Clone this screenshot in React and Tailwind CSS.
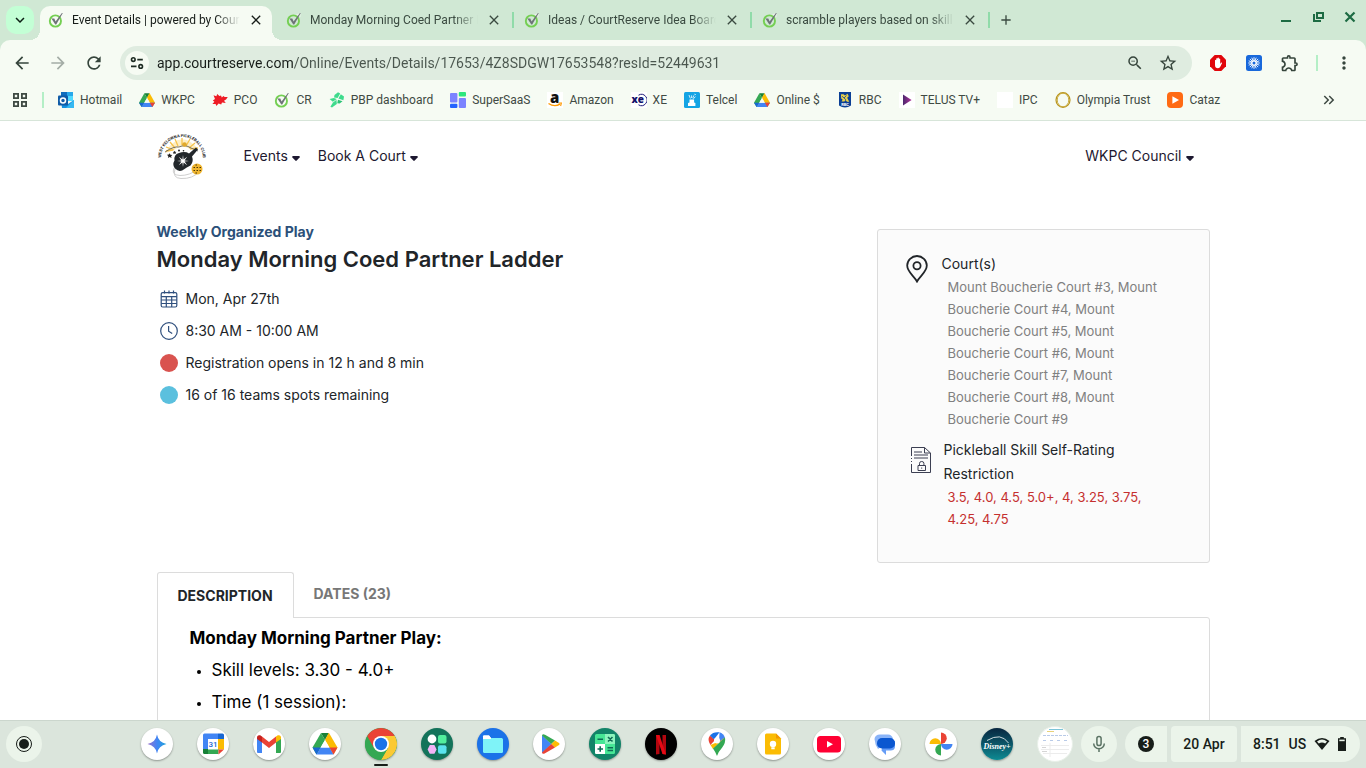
import React from 'react';
import {
  MdArrowBack,
  MdArrowForward,
  MdRefresh,
  MdStarOutline,
  MdMoreVert,
  MdClose,
  MdAdd,
  MdKeyboardArrowDown,
  MdKeyboardDoubleArrowRight,
  MdOutlineExtension,
  MdOutlineZoomOut,
} from 'react-icons/md';

/* ---------- favicons ---------- */

function CourtReserve({ className }) {
  return (
    <svg viewBox="0 0 16 16" className={className} fill="none">
      <circle cx="7.4" cy="9" r="5.6" stroke="#74cf52" strokeWidth="1.9" />
      <path d="M10 2.5 14.5 1v4Z" fill="#f6fbf3" fillOpacity=".7" />
      <path d="M3.4 6.4h2.9l1.3 3.1L13.9 1h.9L8.2 12.4h-.9Z" fill="#6f7378" />
    </svg>
  );
}

function DriveLogo({ className }) {
  return (
    <svg viewBox="0 0 24 22" className={className}>
      <path d="M8 1h8l-4 7Z" fill="#188038" />
      <path d="M8 1 0 15l4 6.5L12 8Z" fill="#34a853" />
      <path d="M16 1h-.4L12 7.6 20 21.5 24 15Z" fill="#fbbc04" />
      <path d="M7.5 15H24l-4 6.5H4Z" fill="#4285f4" />
      <path d="M0 15h7.7L4 21.5Z" fill="#1967d2" />
      <path d="M16.3 15H24l-4 6.5Z" fill="#ea4335" />
      <path d="M12 8 8 15h8Z" fill="#f6fbf3" />
    </svg>
  );
}

function Outlook() {
  return (
    <svg viewBox="0 0 16 16" className="size-4">
      <path d="M3 0h12v8H3Z" fill="#28a8ea" />
      <path d="M3 0h6v5H3Z" fill="#0f6cbd" />
      <path d="M9 4h6v5H9Z" fill="#50d9ff" />
      <path d="M3 8l7 4 6-4v8H4Z" fill="#1490df" />
      <path d="M16 8v8H8Z" fill="#35b8f1" />
      <rect y="3.5" width="10" height="10" rx="1" fill="#0f5ba7" />
      <circle cx="5" cy="8.5" r="2.5" fill="none" stroke="#fff" strokeWidth="1.5" />
    </svg>
  );
}

function Maple() {
  return (
    <svg viewBox="0 0 16 16" className="size-4" fill="#ee1c25">
      <path d="M1.5 3.2 4.4 4.2 5.2 2 7.4 4 9 3.4 9.8 5.4 11.500 4 12.600 5 15.800 5 14 7.400 12 8.800 13.800 11 10 10.600 9.200 12.400 6.600 11.600 4.400 14 3.600 12 .4 12 2.400 9.800.8 8.600 3 7Z" />
    </svg>
  );
}

function Paddle() {
  return (
    <svg viewBox="0 0 16 16" className="size-4" fill="#3edb8c">
      <path d="M5.5 3 9 .3l2.2 1.3L8.6 6 5 5.4Z" />
      <path d="M11.800 2.200 15 4.600l-.6 3.600-5-1.600Z" />
      <path d="M.6 7 4.800 6l3 1L3.800 9.800Z" />
      <path d="M9 7.800l4.500 1.400-2.800 2.400-2.500-.4Z" fill="#2bc476" />
      <path d="M7.500 7.800 7.800 12 3 15.600l-1.600-.8L4 10.600Z" />
    </svg>
  );
}

function SuperSaas() {
  return (
    <svg viewBox="0 0 16 16" className="size-4">
      <rect width="7.4" height="9.5" y="1" rx="1" fill="#7c83ff" />
      <rect x="8.8" width="7.2" height="4.4" rx="1" fill="#2ee67c" />
      <rect y="11.8" width="7.4" height="4.2" rx="1" fill="#2563ff" />
      <rect x="8.8" y="6" width="7.2" height="10" rx="1" fill="#7c83ff" />
    </svg>
  );
}

function Amazon() {
  return (
    <svg viewBox="0 0 16 16" className="size-4">
      <rect width="16" height="16" fill="#fff" />
      <text x="7.6" y="10.5" textAnchor="middle" fontFamily="Open Sans" fontWeight="800" fontSize="15" fill="#111">a</text>
      <path d="M1.5 11.5q6 4 11.5.6" fill="none" stroke="#f90" strokeWidth="1.4" />
      <path d="M11.4 11h3l-.8 3" fill="none" stroke="#f90" strokeWidth="1.1" />
    </svg>
  );
}

function Xe() {
  return (
    <svg viewBox="0 0 16 16" className="size-4">
      <rect width="16" height="16" fill="#fff" />
      <path d="M7.5 3.2a5.6 5.6 0 1 1 0 9.6" fill="none" stroke="#1f1c7a" strokeWidth="1" />
      <text x="6.8" y="11.2" textAnchor="middle" fontFamily="Open Sans" fontWeight="800" fontSize="10" fill="#14116b">xe</text>
    </svg>
  );
}

function Telcel() {
  return (
    <svg viewBox="0 0 16 16" className="size-4">
      <rect width="16" height="16" rx="1.5" fill="#14a4e4" />
      <path d="M5.5 7.5h4.6v3l1.3.6V14H4v-2.900l1.500-.6Z" fill="#fff" />
      <path d="M6.400 6.500 5 3M7.600 6V3.400M8.700 6.200l1.200-2.800M9.400 6.800l2-2.200M10.400 2.200l1.400.4" stroke="#fff" strokeWidth=".8" />
    </svg>
  );
}

function Rbc() {
  return (
    <svg viewBox="0 0 16 16" className="size-4">
      <path d="M2 0h12v13.500q-6 4-12 0Z" fill="#0b3f95" />
      <path d="M4 2.200h2.500L8 3.400l2.500-1.600 1.300 2.400-1.600 1.600L12.200 9.800H10L8.600 8 7.400 9.600H4.600l1-2.200-1.400-1Z" fill="#e8d04a" />
      <path d="M5 4.200l4 3.600M9.500 3.500 7 6" stroke="#0b3f95" strokeWidth=".8" />
      <text x="8" y="14" textAnchor="middle" fontFamily="Roboto" fontWeight="700" fontSize="4" fill="#fff">RBC</text>
    </svg>
  );
}

function Telus() {
  return (
    <svg viewBox="0 0 16 16" className="size-4">
      <defs>
        <linearGradient id="telus" x1="0" x2="1">
          <stop offset="0" stopColor="#4b286d" />
          <stop offset="1" stopColor="#b0329a" />
        </linearGradient>
      </defs>
      <rect width="16" height="16" fill="#fff" />
      <path d="M4 2.500 12.600 8 4 13.500Z" fill="url(#telus)" />
    </svg>
  );
}

function Blank() {
  return <span className="block size-4 bg-white" />;
}

function Olympia() {
  return (
    <svg viewBox="0 0 16 16" className="size-4" fill="none">
      <ellipse cx="8" cy="8" rx="7" ry="7.3" stroke="#b8941c" strokeWidth="1.2" />
      <ellipse cx="8" cy="8" rx="5.8" ry="6.8" stroke="#c9aa3c" strokeWidth="1" />
    </svg>
  );
}

function Cataz() {
  return (
    <svg viewBox="0 0 16 16" className="size-4">
      <rect width="16" height="16" rx="4" fill="#ff6a13" />
      <path d="M5.400 4.200 12 8l-6.600 3.800Z" fill="#fff" />
    </svg>
  );
}

/* ---------- browser ---------- */

const tabs = [
  'Event Details | powered by CourtReserve',
  'Monday Morning Coed Partner Ladder',
  'Ideas / CourtReserve Idea Board',
  'scramble players based on skill level',
];

const bookmarks = [
  { label: 'Hotmail', icon: <Outlook /> },
  { label: 'WKPC', icon: <DriveLogo className="size-4" /> },
  { label: 'PCO', icon: <Maple /> },
  { label: 'CR', icon: <CourtReserve className="size-4" /> },
  { label: 'PBP dashboard', icon: <Paddle /> },
  { label: 'SuperSaaS', icon: <SuperSaas /> },
  { label: 'Amazon', icon: <Amazon /> },
  { label: 'XE', icon: <Xe /> },
  { label: 'Telcel', icon: <Telcel /> },
  { label: 'Online $', icon: <DriveLogo className="size-4" /> },
  { label: 'RBC', icon: <Rbc /> },
  { label: 'TELUS TV+', icon: <Telus /> },
  { label: 'IPC', icon: <Blank /> },
  { label: 'Olympia Trust', icon: <Olympia /> },
  { label: 'Cataz', icon: <Cataz /> },
];

function TabStrip() {
  return (
    <div className="flex h-10 items-start bg-[#d0e8d4] pt-1.5 pl-1.5 text-xs text-[#3a4a40]">
      <button aria-label="Search tabs" className="mr-1.5 flex size-7 items-center justify-center rounded-[10px] bg-[#c3ffd5] text-[#0c1f14]">
        <MdKeyboardArrowDown className="text-lg" />
      </button>
      {tabs.map((title, i) => (
        <React.Fragment key={title}>
          <div
            className={
              i === 0
                ? 'relative flex h-[34px] w-[232px] items-center rounded-t-[10px] bg-[#f6fbf3] pr-2 pb-1.5 pl-2 text-[#171d19]'
                : 'flex h-7 w-[232px] items-center pr-2 pl-2'
            }
          >
            {i === 0 && (
              <>
                <span className="absolute bottom-0 -left-2.5 size-2.5 bg-[radial-gradient(circle_at_top_left,transparent_10px,#f6fbf3_10px)]" />
                <span className="absolute -right-2.5 bottom-0 size-2.5 bg-[radial-gradient(circle_at_top_right,transparent_10px,#f6fbf3_10px)]" />
              </>
            )}
            <CourtReserve className="mr-2 size-4 shrink-0" />
            <span className="w-[168px] overflow-hidden whitespace-nowrap [mask-image:linear-gradient(to_right,black_144px,transparent_168px)]">
              {title}
            </span>
            <button aria-label="Close tab" className="ml-auto">
              <MdClose className="size-4" />
            </button>
          </div>
          <span className={i === 0 ? 'w-1.5' : 'mx-0.5 mt-1.5 h-4 w-0.5 bg-[#90dba9]'} />
        </React.Fragment>
      ))}
      <button aria-label="New tab" className="flex size-7 items-center justify-center">
        <MdAdd className="size-4" />
      </button>
      <div className="ml-auto flex gap-4 pt-[3px] pr-2 text-[#1d6b43]">
        <button aria-label="Minimize">
          <svg viewBox="0 0 16 16" className="size-4" fill="currentColor"><path d="M3 11h10v2H3Z" /></svg>
        </button>
        <button aria-label="Restore">
          <svg viewBox="0 0 16 16" className="size-4" fill="none" stroke="currentColor" strokeWidth="2">
            <path d="M7 4h6v5H7ZM4 5v7h7" />
          </svg>
        </button>
        <button aria-label="Close window">
          <svg viewBox="0 0 16 16" className="size-4" fill="none" stroke="currentColor" strokeWidth="2.2">
            <path d="m3.500 3.500 9 9M12.500 3.500l-9 9" />
          </svg>
        </button>
      </div>
    </div>
  );
}

function Toolbar() {
  return (
    <div className="bg-[#d0e8d4]">
      <div className="flex h-[46px] items-center rounded-t-[10px] bg-[#f6fbf3] pr-3 pl-3 text-[#36453c]">
        <div className="flex gap-4">
          <button aria-label="Back"><MdArrowBack className="size-5" /></button>
          <button aria-label="Forward" className="text-[#a4ada6]"><MdArrowForward className="size-5" /></button>
          <button aria-label="Reload"><MdRefresh className="size-5" /></button>
        </div>
        <div className="ml-4 flex h-[34px] flex-1 items-center rounded-full bg-[#dfece0] pr-3.5 pl-[5px]">
          <button aria-label="Site information" className="mr-2 flex size-6 items-center justify-center rounded-full bg-[#f6fbf3]">
            <svg viewBox="0 0 16 16" className="size-4" fill="none" stroke="#1d2b22" strokeWidth="1.6">
              <circle cx="4.3" cy="4.6" r="1.8" />
              <path d="M8.3 4.6h5.5M2 11.4h5.5" />
              <circle cx="11.7" cy="11.4" r="1.8" />
            </svg>
          </button>
          <input
            type="text"
            aria-label="Address"
            defaultValue="app.courtreserve.com/Online/Events/Details/17653/4Z8SDGW17653548?resId=52449631"
            className="min-w-0 flex-1 bg-[linear-gradient(to_right,#171d19_137px,#4a564e_137px)] bg-clip-text text-sm text-transparent outline-none"
          />
          <button aria-label="Zoom"><MdOutlineZoomOut className="size-[18px]" /></button>
          <button aria-label="Bookmark this page" className="ml-3.5"><MdStarOutline className="size-5" /></button>
        </div>
        <div className="ml-[18px] flex items-center">
          <button aria-label="Ad blocker">
            <svg viewBox="0 0 16 16" className="size-4">
              <path d="M4.7 0h6.6L16 4.7v6.6L11.3 16H4.7L0 11.3V4.7Z" fill="#e1060b" />
              <path d="M5 9V5.2q.7-.8 1.2 0V3.600q.7-.8 1.300 0V3q.8-.8 1.400 0v.9q.7-.7 1.300 0V9l1-1.400q.8-.3.9.4l-1.700 3.600Q9.700 13.300 8 13.300 5 13.300 5 10Z" fill="#fff" />
            </svg>
          </button>
          <button aria-label="Loom" className="ml-5">
            <svg viewBox="0 0 16 16" className="size-4">
              <rect width="16" height="16" rx="2.5" fill="#1868db" />
              <path d="M8 2.200v11.600M2.200 8h11.600M3.900 3.900l8.200 8.200M12.100 3.900l-8.200 8.200M5.800 2.700l4.400 10.600M10.200 2.700 5.800 13.300M2.700 5.800l10.600 4.400M13.300 5.800 2.700 10.200" stroke="#fff" strokeWidth=".9" />
              <circle cx="8" cy="8" r="2.8" fill="#fff" />
              <circle cx="8" cy="8" r="1.5" fill="#1868db" />
            </svg>
          </button>
          <button aria-label="Extensions" className="ml-[18px]"><MdOutlineExtension className="size-5" /></button>
          <span className="ml-4 h-4 w-0.5 bg-[#b4efc6]" />
          <button aria-label="Menu" className="ml-4"><MdMoreVert className="size-5" /></button>
        </div>
      </div>
    </div>
  );
}

function Bookmarks() {
  return (
    <nav className="flex h-[35px] items-start border-b border-[#d7e5d9] bg-[#f6fbf3] pt-1.5 pr-7 pl-3 text-xs text-[#3f4a43]">
      <div className="flex h-4 flex-1 items-center">
        <button aria-label="All tabs">
          <svg viewBox="0 0 16 16" className="size-4" fill="none" stroke="#3f4a43" strokeWidth="1.8">
            <path d="M1.900 1.900h4.200v4.200H1.900zM9.900 1.900h4.200v4.200H9.900zM1.900 9.900h4.200v4.200H1.900zM9.900 9.900h4.200v4.200H9.900z" />
          </svg>
        </button>
        <span className="mr-3.5 ml-3.5 h-4 w-0.5 bg-[#b4efc6]" />
        <div className="flex gap-[17px]">
          {bookmarks.map((b) => (
            <a key={b.label} href="#" className="flex items-center gap-1.5 whitespace-nowrap">
              {b.icon}
              {b.label}
            </a>
          ))}
        </div>
        <button aria-label="More bookmarks" className="ml-auto">
          <MdKeyboardDoubleArrowRight className="size-[18px]" />
        </button>
      </div>
    </nav>
  );
}

/* ---------- page ---------- */

function ClubLogo() {
  return (
    <svg viewBox="0 0 50 50" className="size-[50px]">
      <defs>
        <path id="arc" d="M4 27A21 21 0 0 1 46 27" />
      </defs>
      <path d="M8 21Q24-3 41 18L33 18Q25 13 17 19L8 22Z" fill="#fdeec6" />
      <path d="M17 19 9 16M18 17l-5-6M21 15 18 8M25 14V7M29 15l4-7M32 17l6-5M33 18l8-1M9 20l7-1" stroke="#f6c34c" strokeWidth="1.3" />
      <path d="M8 21q9-6 14-5 6-3 12 1l7 3" stroke="#555" strokeWidth=".8" fill="none" />
      <circle cx="27.500" cy="13.500" r="2.300" fill="#e0a92c" />
      <text fontFamily="Roboto" fontWeight="700" fontSize="4" fill="#222" textAnchor="middle">
        <textPath href="#arc" startOffset="50%">WEST KELOWNA PICKLEBALL CLUB</textPath>
      </text>
      <path d="M18 38q-3 9 6 9.500 12 .5 18-7M17 37q-3 7 6 7.500 10 0 17-6" stroke="#cfcfcf" strokeWidth="1" fill="none" />
      <path d="m39 16.500 2 2-6 7q2 5-1.500 9-4.500 2-6 3.500-5 4-9.500-.5-3-4-.5-8-1-6 4.500-7.500 6-2 10 .5Z" fill="#22272b" />
      <path d="m26 24 .6 4.400 3.600-2.600-2.600 3.600L32 30l-4.400.6 2.600 3.600-3.600-2.600L26 36l-.6-4.400-3.600 2.600 2.600-3.600L20 30l4.400-.6-2.600-3.600 3.600 2.600Z" fill="#fff" />
      <path d="m12.500 22.300 1 1.500 1.800.1-1.200 1.400.5 1.700-2-.9-1.600.8.3-1.700-1.300-1.400 1.800-.2Z" fill="#222" />
      <path d="m17.500 19.800.7 1 1.200.1-.9.9.3 1.200-1.300-.6-1.200.6.3-1.200-.8-.9 1.200-.1Z" fill="#222" />
      <circle cx="22" cy="19.500" r="1" fill="#222" />
      <circle cx="26.500" cy="19.800" r=".8" fill="#222" />
      <circle cx="40" cy="38" r="5.500" fill="#efb52f" />
      <path d="M36.500 36.500H38m1.500 0H41m1.500 0H44M36.500 39.500H38m1.500 0H41m1.500 0H44M38.500 42h1.500M38.500 34h1.500" stroke="#4a3606" strokeWidth="1.200" />
    </svg>
  );
}

function Caret() {
  return (
    <svg viewBox="0 0 8 5" className="mt-1 h-[5px] w-2" fill="#1d1830">
      <path d="M.8 0h6.400q1 .6.400 1.400L4.700 4.600q-.7.7-1.400 0L.4 1.400Q-.2.6.8 0Z" />
    </svg>
  );
}

function CalendarIcon() {
  return (
    <svg viewBox="0 0 18 18" className="size-[18px]" fill="none" stroke="#2f4f7d" strokeWidth="1.2">
      <rect x="1.200" y="2.600" width="15.600" height="14.400" rx="1.500" />
      <path d="M1.200 6.600h15.600M1.200 10h15.600M1.200 13.500h15.600M6.300 6.600V17M11.700 6.600V17M4.500.5v3M9 .5v3M13.500.5v3" />
    </svg>
  );
}

function ClockIcon() {
  return (
    <svg viewBox="0 0 18 18" className="size-[18px]" fill="none" stroke="#2f4f7d" strokeWidth="1.2">
      <circle cx="9" cy="9" r="8.300" />
      <path d="M8.600 4v5.200l3.600 2.400" />
    </svg>
  );
}

function PinIcon() {
  return (
    <svg viewBox="0 0 22 28" className="h-7 w-[22px]" fill="none" stroke="#212529" strokeWidth="1.8">
      <path d="M11 26.500C8 21 1.200 17 1.200 10.600a9.800 9.600 0 0 1 19.600 0C20.800 17 14 21 11 26.500Z" />
      <circle cx="11" cy="10.800" r="3.600" />
    </svg>
  );
}

function RestrictionIcon() {
  return (
    <svg viewBox="0 0 22 28" className="h-7 w-[22px]" fill="none" stroke="#3c3f52" strokeWidth="1">
      <path d="M1.500 10V1.500h13L20.500 7v19.500h-19V18M14.500 1.500V7h6M1.500 12v1M1.500 15v1" />
      <path d="M4 6h8M4 9h14M4 12h14M8 19.500h7.500v5H8zM9.500 19.500v-2.200q0-1.800 2.200-1.800t2.200 1.800v2.200M11.700 21.500v1.200" />
    </svg>
  );
}

const details = [
  { icon: <CalendarIcon />, text: 'Mon, Apr 27th' },
  { icon: <ClockIcon />, text: '8:30 AM - 10:00 AM' },
  { icon: <span className="size-[18px] rounded-full bg-[#d9534f]" />, text: 'Registration opens in 12 h and 8 min' },
  { icon: <span className="size-[18px] rounded-full bg-[#5bc0de]" />, text: '16 of 16 teams spots remaining' },
];

function EventPage() {
  return (
    <main className="min-h-0 flex-1 overflow-hidden bg-white font-['Inter',sans-serif] text-[#212529]">
      <div className="mx-auto max-w-[1053px]">
        <header className="flex h-[70px] items-center text-sm text-[#1d1830]">
          <a href="#" aria-label="West Kelowna Pickleball Club"><ClubLogo /></a>
          <nav className="ml-[37px] flex gap-[18px]">
            <button className="flex items-center gap-1">Events <Caret /></button>
            <button className="flex items-center gap-1">Book A Court <Caret /></button>
          </nav>
          <button className="mr-4 ml-auto flex items-center gap-1">WKPC Council <Caret /></button>
        </header>

        <div className="mt-[38px] flex items-start justify-between">
          <section className="-mt-2">
            <p className="text-sm leading-[22px] font-bold text-[#2b5079]">Weekly Organized Play</p>
            <h1 className="text-[22px] leading-8 font-semibold">Monday Morning Coed Partner Ladder</h1>
            <ul className="mt-2 pl-[3px]">
              {details.map((d) => (
                <li key={d.text} className="flex h-8 items-center gap-2 text-sm">
                  {d.icon}
                  {d.text}
                </li>
              ))}
            </ul>
          </section>

          <aside className="w-[333px] rounded-[3px] border border-[#dcdcdc] bg-[#fbfbfb] px-7 pt-[22px] pb-8">
            <div className="flex gap-3.5">
              <div className="pt-[3px]"><PinIcon /></div>
              <div>
                <h2 className="text-sm leading-6">Court(s)</h2>
                <p className="pr-4 pl-1.5 text-[13px] leading-[22px] text-[#808080]">
                  Mount Boucherie Court #3, Mount Boucherie Court #4, Mount Boucherie Court #5, Mount Boucherie Court #6, Mount Boucherie Court #7, Mount Boucherie Court #8, Mount Boucherie Court #9
                </p>
              </div>
            </div>
            <div className="mt-2 flex gap-3 pl-1">
              <div className="pt-2"><RestrictionIcon /></div>
              <div>
                <h2 className="pr-4 text-sm leading-6">Pickleball Skill Self-Rating Restriction</h2>
                <p className="pr-4 pl-1 text-[13px] leading-[22px] text-[#c5302f]">3.5, 4.0, 4.5, 5.0+, 4, 3.25, 3.75, 4.25, 4.75</p>
              </div>
            </div>
          </aside>
        </div>

        <div role="tablist" className="mt-[9px] flex text-sm font-bold">
          <button role="tab" aria-selected="true" className="relative z-10 -mb-px h-[46px] rounded-t-[3px] border border-b-0 border-[#dcdcdc] bg-white px-5">
            DESCRIPTION
          </button>
          <button role="tab" aria-selected="false" className="h-11 px-5 text-[#777]">DATES (23)</button>
        </div>
        <section className="rounded-tr-[3px] border border-[#dcdcdc] px-8 pt-1 pb-8 text-black">
          <h3 className="text-[17px] leading-8 font-bold">Monday Morning Partner Play:</h3>
          <ul className="list-disc pl-[22px] text-[17px] leading-8 marker:text-xs">
            <li>Skill levels: 3.30 - 4.0+</li>
            <li>Time (1 session):</li>
          </ul>
        </section>
      </div>
    </main>
  );
}

/* ---------- shelf ---------- */

const apps = [
  {
    name: 'Gemini',
    bg: 'bg-white',
    art: (
      <>
        <defs>
          <linearGradient id="gem" x1="0" x2="1">
            <stop offset="0" stopColor="#9b72cb" />
            <stop offset=".5" stopColor="#4285f4" />
            <stop offset="1" stopColor="#1fa4d8" />
          </linearGradient>
        </defs>
        <path d="M16 6.500Q17.500 14.500 25.500 16 17.500 17.500 16 25.500 14.500 17.500 6.500 16 14.500 14.500 16 6.500Z" fill="url(#gem)" />
      </>
    ),
  },
  {
    name: 'Calendar',
    bg: 'bg-white',
    art: (
      <>
        <path d="M6 7q0-1.500 1.500-1.500H21V11H11v10H6Z" fill="#4285f4" />
        <path d="M21 5.500h4.500Q27 5.500 27 7v4h-6Z" fill="#1967d2" />
        <path d="M21 11h6v10.500h-6Z" fill="#fbbc04" />
        <path d="M11 21h10.500v5H11Z" fill="#34a853" />
        <path d="M6 21h5v5H7.500Q6 26 6 24.500Z" fill="#188038" />
        <path d="M21.500 21.500H27l-5.500 5Z" fill="#ea4335" />
        <path d="M11 11h10v10.500H11Z" fill="#fff" />
        <text x="16" y="19" textAnchor="middle" fontFamily="Roboto" fontWeight="500" fontSize="8" fill="#1967d2">31</text>
      </>
    ),
  },
  {
    name: 'Gmail',
    bg: 'bg-white',
    art: (
      <>
        <path d="M4 9v15q0 1 1 1h4V13Z" fill="#4285f4" />
        <path d="M28 9v15q0 1-1 1h-4V13Z" fill="#34a853" />
        <path d="M9 8.500 16 14l7-5.500V14.500L16 20 9 14.500Z" fill="#ea4335" />
        <path d="M4 10q0-3.500 3.200-2.700L9 8.500v6L4 11Z" fill="#c5221f" />
        <path d="M28 10q0-3.500-3.200-2.700L23 8.500v6l5-3.500Z" fill="#fbbc04" />
      </>
    ),
  },
  {
    name: 'Drive',
    bg: 'bg-white',
    art: (
      <>
        <path d="M12 5h8l-4 7Z" fill="#188038" />
        <path d="M12 5 3.500 19.500l4 7L16 12Z" fill="#34a853" />
        <path d="M20 5h-.4L16 12l8.500 14.500 4-7Z" fill="#fbbc04" />
        <path d="M11.500 19.500h9.200l3.800 7h-17Z" fill="#4285f4" />
        <path d="M3.500 19.500h8l-4 7Z" fill="#1967d2" />
        <path d="M20.500 19.500h8l-4 7Z" fill="#ea4335" />
        <path d="m16 12-4.300 7.500h8.600Z" fill="#fff" />
      </>
    ),
  },
  {
    name: 'Chrome',
    bg: 'bg-[#34a853]',
    active: true,
    art: (
      <>
        <path d="M16 8h13.860A16 16 0 0 1 16 32L22.930 20Z" fill="#fbc934" />
        <path d="M16 16 2.140 8A16 16 0 0 0 16 32l6.930-12Z" fill="#34a853" />
        <path d="M2.140 8A16 16 0 0 1 29.860 8H16L9.070 20Z" fill="#ea4335" />
        <circle cx="16" cy="16" r="8" fill="#fff" />
        <circle cx="16" cy="16" r="6.200" fill="#1a73e8" />
      </>
    ),
  },
  {
    name: 'Apps',
    bg: 'bg-[#13735a]',
    art: (
      <>
        <circle cx="11" cy="11" r="4.400" fill="#fff" />
        <rect x="17" y="7" width="8.500" height="8.500" rx="2" fill="#52ee9d" />
        <path d="M8.800 17h4.600l2.200 4.400-2.200 4.400H8.800l-2.200-4.400Z" fill="#f3b3f7" />
        <rect x="17" y="17.300" width="8.500" height="8.500" rx="2" fill="#5be3ee" />
      </>
    ),
  },
  {
    name: 'Files',
    bg: 'bg-[#1b72e8]',
    art: (
      <>
        <path d="M6 8.500q0-1 1-1h5l2 2.500h10.500v3H6Z" fill="#fff" />
        <rect x="6" y="10" width="20" height="15" rx="1.500" fill="#7ff3f8" />
        <path d="M6 8.500q0-1 1-1h5l2 2.500v1H6Z" fill="#fff" />
      </>
    ),
  },
  {
    name: 'Play Store',
    bg: 'bg-white',
    art: (
      <>
        <path d="M9 7v18.500L18.500 16Z" fill="#4285f4" />
        <path d="M9 7.500q.5-2 3-.7L22 12.500 18.300 16Z" fill="#34a853" />
        <path d="M22 12.500 26 15q1.300 1 0 2l-4 2.500L18.300 16Z" fill="#fbbc04" />
        <path d="M9 24.500q.5 2 3 .7l10-5.700L18.300 16Z" fill="#ea4335" />
      </>
    ),
  },
  {
    name: 'Calculator',
    bg: 'bg-[#128468]',
    art: (
      <>
        <rect x="6" y="6" width="20" height="20" rx="1.500" fill="#46e695" />
        <path d="M6 16h10v10H7.500Q6 26 6 24.500Z" fill="#fff" />
        <path d="M16 6h8.500Q26 6 26 7.500V16H16Z" fill="#8df5bd" />
        <path d="M8.500 11.200h5.500M8.500 21h5.500M11.200 18.300v5.500M18.500 19.800H24M18.500 22.500H24M19 9l4.500 4.500M23.500 9 19 13.500" stroke="#0f6b55" strokeWidth="1.600" />
      </>
    ),
  },
  {
    name: 'Netflix',
    bg: 'bg-black',
    art: (
      <>
        <path d="M11 7h3.500v19l-3.500.5ZM17.500 7H21v19.500l-3.500-.5Z" fill="#b1060f" />
        <path d="M11 7h3.500L21 26.500l-3.500-.6Z" fill="#e50914" />
      </>
    ),
  },
  {
    name: 'Maps',
    bg: 'bg-white',
    art: (
      <>
        <path d="M9 7.500q-3 4 .4 9.500l4.600-5Z" fill="#ea4335" />
        <path d="M9 7.500Q12 3.500 18.500 4.300L13 11.500Z" fill="#1a73e8" />
        <path d="M18.500 4.300q4 1 5.500 5.700L18 15Z" fill="#4285f4" />
        <path d="M19 13 9.500 17l2.500 4 12-12Z" fill="#fbbc04" />
        <path d="M24 9.500q1 5-2.800 10Q17.500 23.500 16 28q-1.500-4-4-7.500Z" fill="#34a853" />
        <circle cx="16" cy="12.500" r="3" fill="#fff" />
      </>
    ),
  },
  {
    name: 'Keep',
    bg: 'bg-white',
    art: (
      <>
        <path d="M8 7q0-1.500 1.500-1.500H19l5 5V25q0 1.500-1.500 1.500h-13Q8 26.500 8 25Z" fill="#fbbc04" />
        <path d="M19 5.500l5 5h-5Z" fill="#f29900" />
        <circle cx="16" cy="16" r="3.200" fill="#fff" />
        <path d="M14.300 19.300h3.400v1.900h-3.400z" fill="#fff" />
      </>
    ),
  },
  {
    name: 'YouTube',
    bg: 'bg-white',
    art: (
      <>
        <rect x="4" y="8" width="24" height="16.500" rx="3.500" fill="#ff0033" />
        <path d="m14 13 6 3.200-6 3.200Z" fill="#fff" />
      </>
    ),
  },
  {
    name: 'Messages',
    bg: 'bg-white',
    art: (
      <>
        <path d="M5.500 11Q6 6.500 11 6.500h8q4 0 5 4.500L9 21Q6 17 5.500 11Z" fill="#8ab4f8" />
        <path d="M14 13h12v6q-.5 3.500-4.500 3.500H17V27l-4.500-4.500Z" fill="#669df6" />
        <rect x="8" y="10" width="18" height="10.500" rx="5" fill="#0b57d0" />
      </>
    ),
  },
  {
    name: 'Photos',
    bg: 'bg-white',
    art: (
      <>
        <path d="M16 4.500a5.750 5.750 0 0 1 0 11.500Z" fill="#ea4335" />
        <path d="M27.500 16A5.750 5.750 0 0 1 16 16Z" fill="#4285f4" />
        <path d="M16 27.500A5.750 5.750 0 0 1 16 16Z" fill="#34a853" />
        <path d="M4.500 16A5.750 5.750 0 0 1 16 16Z" fill="#fbbc04" />
      </>
    ),
  },
  {
    name: 'Disney+',
    bg: 'bg-linear-to-b from-[#07263f] to-[#0d8b93]',
    art: (
      <>
        <path d="M6 12.500Q20 4 27.500 15" fill="none" stroke="#fff" strokeWidth=".8" />
        <text x="16" y="21" textAnchor="middle" fontFamily="Liberation Serif" fontStyle="italic" fontWeight="700" fontSize="8" fill="#fff">Disney+</text>
      </>
    ),
  },
];

function Shelf() {
  return (
    <footer className="flex h-12 shrink-0 items-center bg-[#dbe5dc] pr-1.5 pl-1.5 text-sm font-medium text-[#171d19] shadow-[inset_0_1px_0_#cbd6cd]">
      <button aria-label="Launcher" className="flex size-9 items-center justify-center rounded-full bg-[#ebf4ea]">
        <span className="flex size-4 items-center justify-center rounded-full border border-[#171d19]">
          <span className="size-2.5 rounded-full bg-[#171d19]" />
        </span>
      </button>
      <div className="flex flex-1 items-center justify-end gap-6 pr-2">
        {apps.map((app) => (
          <button key={app.name} aria-label={app.name} className="relative">
            <span className={`block size-8 overflow-hidden rounded-full shadow-[0_1px_2px_rgba(0,0,0,0.35)] ${app.bg}`}>
              <svg viewBox="0 0 32 32" className="size-8">{app.art}</svg>
            </span>
            {app.active && <span className="absolute -bottom-1.5 left-[9px] h-0.5 w-3.5 rounded-full bg-[#171d19]" />}
          </button>
        ))}
        <button aria-label="Recent screenshot" className="size-9 overflow-hidden rounded-full border border-[#e8f0e8] bg-white">
          <svg viewBox="0 0 34 34" fill="none">
            <path d="M11 2.500h14" stroke="#7cc4d8" />
            <path d="M9 4.500h7" stroke="#e8d27a" />
            <path d="M5 8.500h25M5 13.500h3M12 13.500h3M19 13.500h3M26 13.500h4" stroke="#b9cbe8" strokeDasharray="3 1" />
            <path d="M3 18.500h28M3 22.500h28M5 26.500h24M12 16v14" stroke="#ececec" />
            <path d="M4 20.500h4M4 24.500h5" stroke="#d5d5d5" />
          </svg>
        </button>
      </div>
      <button aria-label="Dictation" className="mr-2 flex size-9 items-center justify-center rounded-full bg-[#ebf4ea]">
        <svg viewBox="0 0 18 18" className="size-[18px]" fill="none" stroke="#5b7364" strokeWidth="1.500">
          <rect x="6.900" y="1.500" width="4.200" height="9" rx="2.100" />
          <path d="M3.700 8.500a5.300 5.300 0 0 0 10.600 0M9 13.800V17" />
        </svg>
      </button>
      <div className="flex gap-1">
        <button className="flex h-9 w-[42px] items-center justify-center rounded-l-full rounded-r bg-[#ebf4ea]">
          <span className="flex size-4 items-center justify-center rounded-full bg-[#171d19] text-xs text-white">3</span>
        </button>
        <button className="h-9 w-[66px] rounded bg-[#ebf4ea]">20 Apr</button>
        <button className="flex h-9 w-[119px] items-center justify-between rounded-l rounded-r-full bg-[#ebf4ea] pr-3.5 pl-3">
          <span>8:51</span>
          <span>US</span>
          <svg viewBox="0 0 16 14" className="h-3.5 w-4">
            <path d="M.5 4Q8-2 15.500 4L8 13Z" fill="#171d19" />
            <path d="M3 4.400Q8 .8 13 4.400L11.200 6.500Q8 4.600 4.800 6.500Z" fill="#ebf4ea" />
          </svg>
          <svg viewBox="0 0 8 14" className="h-3.5 w-2" fill="#171d19">
            <path d="M2.200 0h3.600v1.200H8V14H0V1.200h2.200Z" />
            <path d="M1.300 2.600h5.400v1.600H1.300Z" fill="#ebf4ea" />
          </svg>
        </button>
      </div>
    </footer>
  );
}

function App() {
  return (
    <div className="flex h-screen flex-col overflow-hidden bg-white font-['Roboto',sans-serif]">
      <TabStrip />
      <Toolbar />
      <Bookmarks />
      <EventPage />
      <Shelf />
    </div>
  );
}

export default App;
